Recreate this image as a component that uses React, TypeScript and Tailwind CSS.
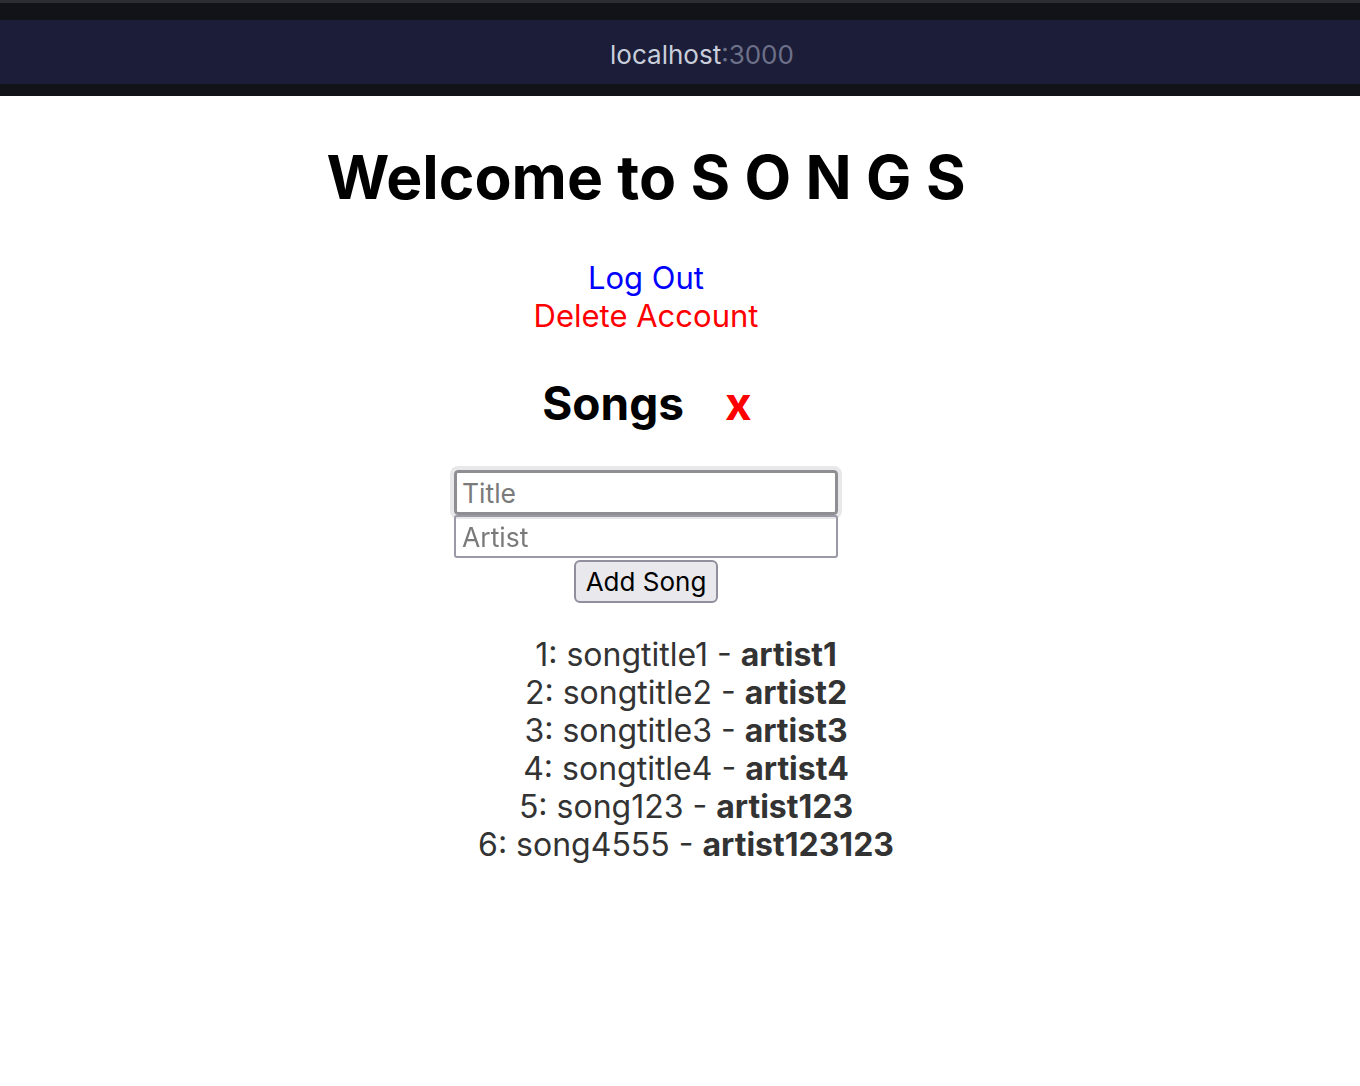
import { useState } from 'react';

const songs = [
  { title: 'songtitle1', artist: 'artist1' },
  { title: 'songtitle2', artist: 'artist2' },
  { title: 'songtitle3', artist: 'artist3' },
  { title: 'songtitle4', artist: 'artist4' },
  { title: 'song123', artist: 'artist123' },
  { title: 'song4555', artist: 'artist123123' },
];

function BrowserBar() {
  return (
    <div className="h-[96px] bg-[#111318] flex flex-col">
      <div className="h-[3px] bg-[#2c2d33]" />
      <div className="h-[17px]" />
      <div className="h-[64px] bg-[#1c1d38] flex items-center justify-center pl-[44px] pt-[4px]">
        <span className="text-[26px] text-[#c9cedb]">localhost</span>
        <span className="text-[26px] text-[#6c7088]">:3000</span>
      </div>
    </div>
  );
}

export default function App() {
  const [title, setTitle] = useState('');
  const [artist, setArtist] = useState('');

  return (
    <div className="min-h-screen bg-white font-['Inter','Noto_Sans',sans-serif]">
      <BrowserBar />

      <div className="w-[1292px] flex flex-col items-center text-center">
        <h1 className="mt-[41px] text-[60.6px] font-bold text-black leading-[80px]">Welcome to S O N G S</h1>

        <div className="mt-[42px] flex flex-col items-center text-[31px] leading-[38px]">
          <a href="#" className="text-[#0000ff]">Log Out</a>
          <a href="#" className="text-[#ff0000]">Delete Account</a>
        </div>

        <div className="mt-[38px] flex items-center gap-[41px] pl-[2px]">
          <h2 className="text-[46px] font-bold text-black leading-[60px]">Songs</h2>
          <button className="text-[46px] font-bold text-[#ff0000] leading-[60px]">x</button>
        </div>

        <form className="mt-[37px] flex flex-col items-center" onSubmit={(e) => e.preventDefault()}>
          <input
            autoFocus
            value={title}
            onChange={(e) => setTitle(e.target.value)}
            placeholder="Title"
            className="w-[384px] h-[45px] px-[5px] text-[26.5px] border-[3px] border-[#8e8e93] rounded-[4px] outline-[4px] outline-solid outline-[#e8e8ea] caret-black placeholder:text-[#7a7a7a]"
          />
          <input
            value={artist}
            onChange={(e) => setArtist(e.target.value)}
            placeholder="Artist"
            className="w-[384px] h-[43px] px-[6px] text-[26.5px] border-[2px] border-[#9a9aa6] rounded-[3px] placeholder:text-[#7a7a7a]"
          />
          <button
            type="submit"
            className="mt-[2px] h-[43px] px-[10px] text-[26px] text-black bg-[#e9e9ed] border-[2px] border-[#8f8f9d] rounded-[6px]"
          >
            Add Song
          </button>
        </form>

        <ul className="mt-[33px] pl-[80px] text-[32px] leading-[38px] text-[#333333]">
          {songs.map((s, i) => (
            <li key={i}>
              {i + 1}: {s.title} - <b className="font-bold">{s.artist}</b>
            </li>
          ))}
        </ul>
      </div>
    </div>
  );
}
